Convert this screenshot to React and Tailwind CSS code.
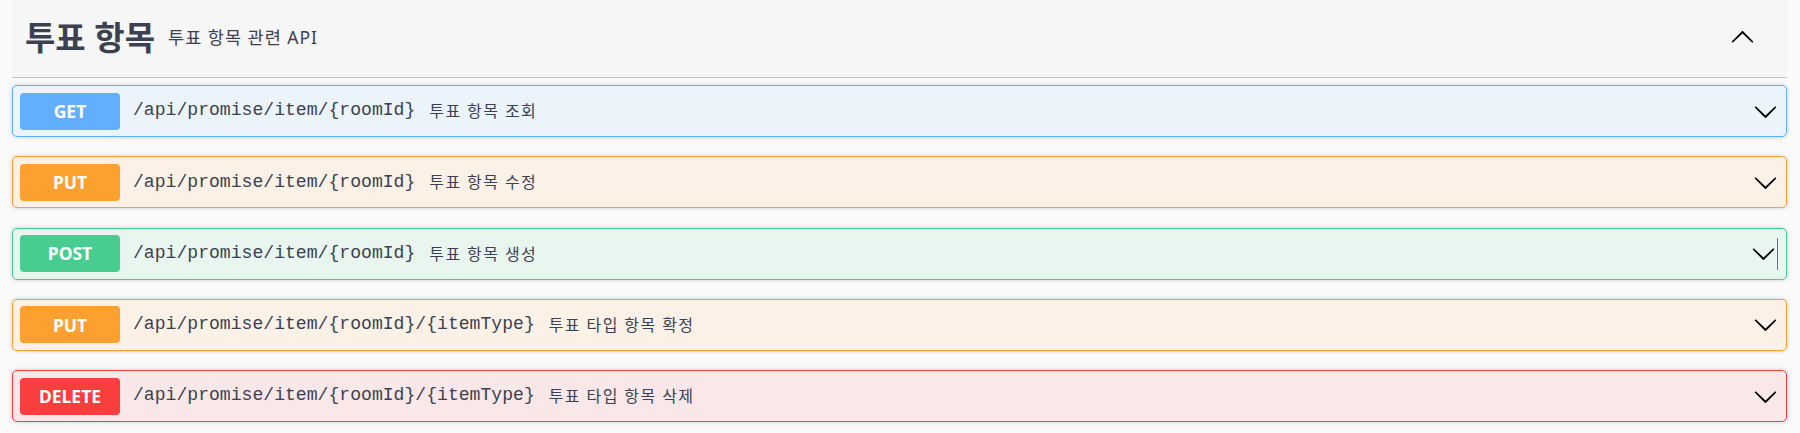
const ITEMS = [
  { method: 'GET', path: '/api/promise/item/{roomId}', summary: '투표 항목 조회', tone: 'get' },
  { method: 'PUT', path: '/api/promise/item/{roomId}', summary: '투표 항목 수정', tone: 'put' },
  { method: 'POST', path: '/api/promise/item/{roomId}', summary: '투표 항목 생성', tone: 'post', caret: true },
  { method: 'PUT', path: '/api/promise/item/{roomId}/{itemType}', summary: '투표 타입 항목 확정', tone: 'put' },
  { method: 'DELETE', path: '/api/promise/item/{roomId}/{itemType}', summary: '투표 타입 항목 삭제', tone: 'delete' },
];

const TONES = {
  get: { box: 'border-[#61affe] bg-[#ebf3fb]', badge: 'bg-[#61affe]' },
  put: { box: 'border-[#fca130] bg-[#fbf1e6]', badge: 'bg-[#fca130]' },
  post: { box: 'border-[#49cc90] bg-[#e8f6ef]', badge: 'bg-[#49cc90]' },
  delete: { box: 'border-[#f93e3e] bg-[#fae7e7]', badge: 'bg-[#f93e3e]' },
};

const Arrow = ({ up }) => (
  <svg width="25" height="25" viewBox="0 0 20 20" className={up ? 'rotate-180' : ''} fill="#000">
    <path d="M17.418 6.109c.272-.268.709-.268.979 0s.271.701 0 .969l-7.908 7.83c-.27.268-.707.268-.979 0l-7.908-7.83c-.27-.268-.27-.701 0-.969.271-.268.709-.268.979 0L10 13.25l7.418-7.141z" />
  </svg>
);

const Operation = ({ item }) => {
  const tone = TONES[item.tone];
  return (
    <div className={`flex items-center h-[52px] border rounded-[5px] shadow-[0_0_4px_rgba(0,0,0,0.19)] pl-[7px] pr-[8px] ${tone.box}`}>
      <span className={`flex items-center justify-center w-[100px] h-[37px] rounded-[4px] text-white font-bold text-[17.5px] ${tone.badge}`}>
        {item.method}
      </span>
      <span className="ml-[13px] text-[18.1px] text-[#3b4151] font-['Liberation_Mono','Noto_Sans_CJK_KR',monospace]">
        {item.path}
      </span>
      <span className="ml-[14px] text-[16px] tracking-[1.4px] text-[#3b4151]">{item.summary}</span>
      <div className="flex-1" />
      {item.caret ? (
        <div className="flex items-center">
          <Arrow />
          <span className="ml-[1px] w-[1.5px] h-[32px] bg-[#6b7280]" />
        </div>
      ) : (
        <Arrow />
      )}
    </div>
  );
};

export default function App() {
  return (
    <div className="min-h-screen bg-[#fafafa] pl-[12px] pr-[13px] font-['Noto_Sans','Noto_Sans_CJK_KR',sans-serif]">
      <div className="flex items-center h-[78px] pb-[3px] bg-[#f6f6f6] border-b border-[#c4c5c9] pl-[13px] pr-[32px]">
        <h3 className="text-[33px] font-bold text-[#3b4151] leading-none">투표 항목</h3>
        <small className="ml-[13px] text-[17.5px] tracking-[1px] text-[#3b4151]">투표 항목 관련 API</small>
        <div className="flex-1" />
        <Arrow up />
      </div>
      <div className="mt-[7px] flex flex-col gap-[19.25px]">
        {ITEMS.map((item, i) => (
          <Operation key={i} item={item} />
        ))}
      </div>
    </div>
  );
}
